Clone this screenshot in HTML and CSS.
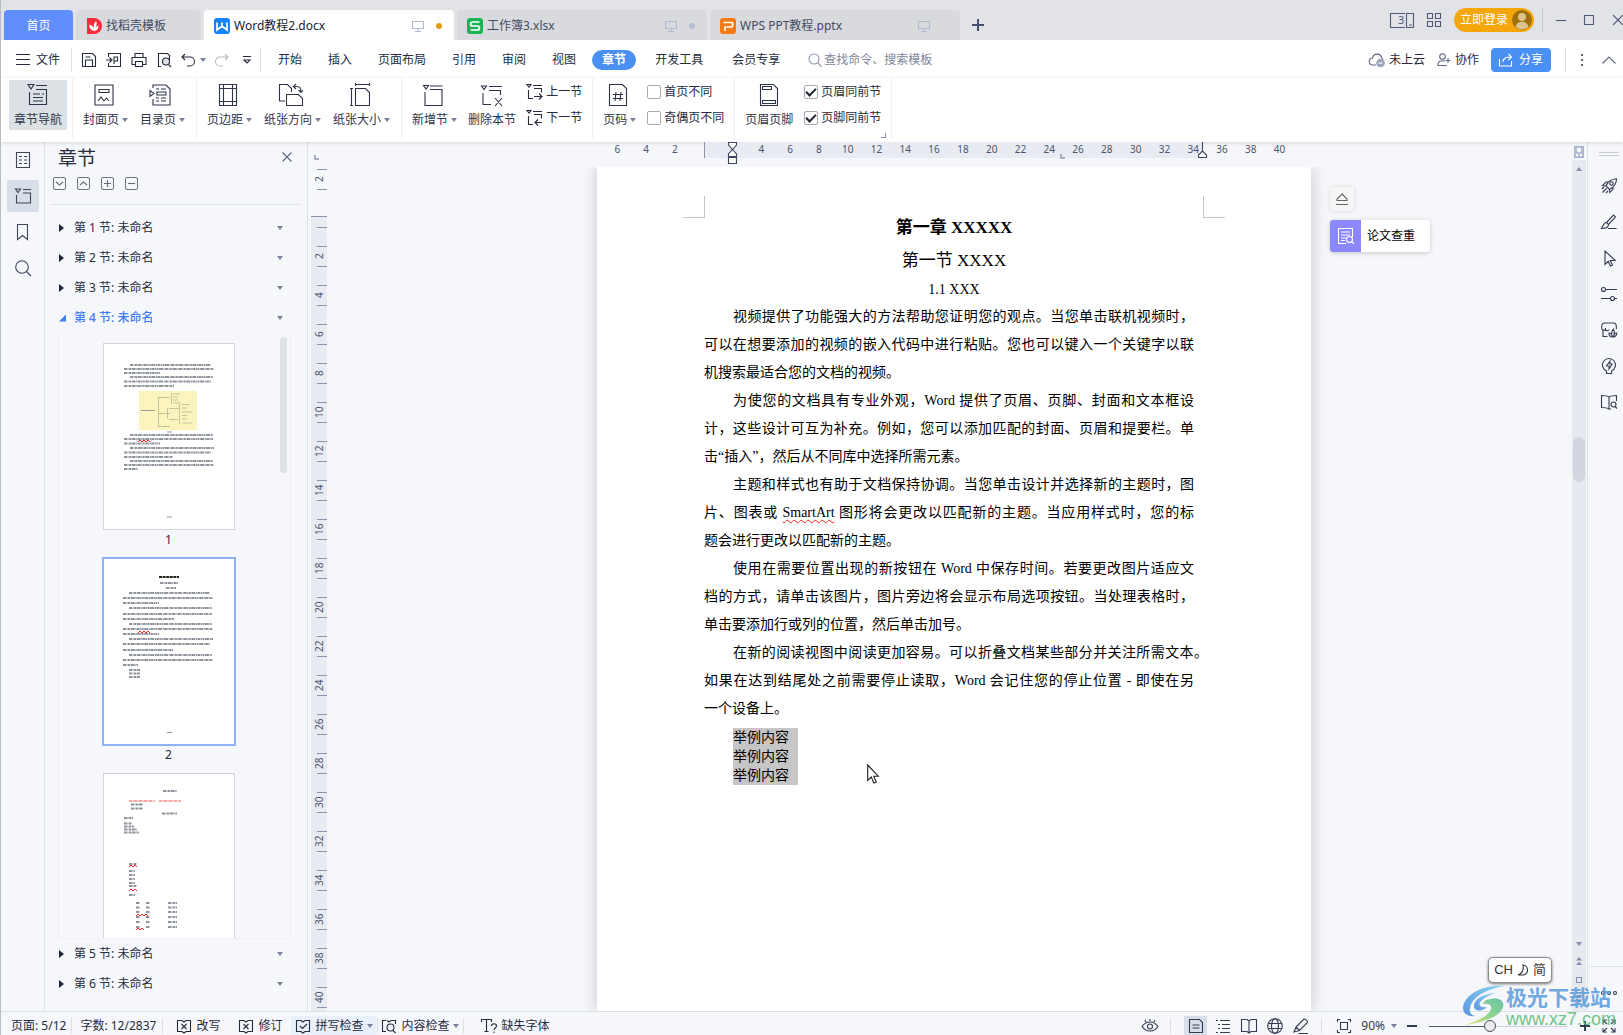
FILE: index.html
```html
<!DOCTYPE html>
<html lang="zh-CN">
<head>
<meta charset="utf-8">
<title>Word教程2.docx</title>
<link rel="stylesheet" href="styles.css">
</head>
<body>
<svg class="defs" aria-hidden="true">
  <symbol id="i-caret" viewBox="0 0 6 4"><path d="M0 0h6L3 4z" fill="currentColor" stroke="none"/></symbol>
  <symbol id="i-monitor" viewBox="0 0 12 12"><path d="M.5 1.500h11v7H.5zM6 9v2M3 11.500h6"/></symbol>
  <symbol id="i-statusbook" viewBox="0 0 16 16"><path d="M6 2.500H1.500v11H6l2 1.500 2-1.500h4.500v-11H10L8 4 6 2.500z"/></symbol>
</svg>

<header class="titlebar">
  <nav class="tabs">
    <button class="tab home">首页</button>
    <button class="tab docer"><svg class="i16" viewBox="0 0 16 16"><path d="M1 0h7a8 8 0 0 1 0 16H1z" fill="#f82b3b" stroke="none"/><path d="M8 13C4 12 3 9 3.500 6.500 6 7.500 7.500 9 8 11 7 8 8 5 10 3c1.500 3 .5 6-1.500 8 1-1.500 2.500-3 4-3.200C12.500 11 11 13 8 13z" fill="#fff" stroke="none"/></svg><span>找稻壳模板</span></button>
    <button class="tab doc active"><svg class="i16" viewBox="0 0 16 16"><rect width="16" height="16" rx="3" fill="#1684fb" stroke="none"/><path d="M3 4.500V12l5-4 5 4V4.500M8 4.500V8" stroke="#fff" stroke-width="1.700"/></svg><span>Word教程2.docx</span><svg class="i12 mon" ><use href="#i-monitor"/></svg><i class="dot orange"></i></button>
    <button class="tab doc"><svg class="i16" viewBox="0 0 16 16"><rect width="16" height="16" rx="3" fill="#18b456" stroke="none"/><path d="M12.500 4h-7C3 4 3 8 5.500 8h5c2.500 0 2.500 4 0 4h-7" stroke="#fff" stroke-width="1.700"/></svg><span>工作簿3.xlsx</span><svg class="i12 mon"><use href="#i-monitor"/></svg><i class="dot"></i></button>
    <button class="tab doc"><svg class="i16" viewBox="0 0 16 16"><rect width="16" height="16" rx="3" fill="#f77a12" stroke="none"/><path d="M3.500 4.500H12c1 0 1 4.500-.5 4.500H5V13" stroke="#fff" stroke-width="1.700"/></svg><span>WPS PPT教程.pptx</span><svg class="i12 mon"><use href="#i-monitor"/></svg><i class="dot none"></i></button>
    <button class="newtab" aria-label="新建"><svg class="i12" viewBox="0 0 12 12"><path d="M6 0v12M0 6h12" stroke-width="2"/></svg></button>
  </nav>
  <div class="winctl">
    <button aria-label="窗口"><svg width="24" height="15" viewBox="0 0 24 15"><path d="M15 .5H.5v14H15M16.500 14.500v-14h7v14zM19 12h3"/></svg><b class="three">3</b></button>
    <button aria-label="应用"><svg width="14" height="14" viewBox="0 0 14 14"><path d="M.5 .5h5v5h-5zM8.500 .5h5v5h-5zM.5 8.500h5v5h-5zM8.500 8.500h5v5h-5z"/></svg></button>
    <button class="login">立即登录<svg width="20" height="20" viewBox="0 0 20 20"><circle cx="10" cy="10" r="10" fill="#a16f08" stroke="none"/><circle cx="10" cy="7" r="4" fill="#dcc28d" stroke="none"/><path d="M3.500 17c1-7 12-7 13 0a10 10 0 0 1-13 0z" fill="#dcc28d" stroke="none"/></svg></button>
    <i class="bar"></i>
    <button class="win" aria-label="最小化"><svg width="10" height="10" viewBox="0 0 10 10"><path d="M0 5.500h10"/></svg></button>
    <button class="win" aria-label="最大化"><svg width="10" height="10" viewBox="0 0 10 10"><path d="M.5 .5h9v9h-9z"/></svg></button>
    <button class="win last" aria-label="关闭"><svg width="12" height="12" viewBox="0 0 12 12"><path d="M1 1l10 10M11 1L1 11"/></svg></button>
  </div>
</header>

<div class="menubar">
  <button class="file"><svg width="14" height="12" viewBox="0 0 14 12"><path d="M0 .5h14M0 5.500h14M0 10.500h14"/></svg>文件</button>
  <i class="bar"></i>
  <div class="quick">
    <button aria-label="保存"><svg class="i16" viewBox="0 0 16 16"><path d="M1.500 1.500h10l3 3v10h-13zM4.500 14.500V8h7v6.500M4.500 5h5"/></svg></button>
    <button aria-label="输出"><svg class="i16" viewBox="0 0 16 16"><path d="M2.500 5V1.500h12v13h-12V11M0 8h5M3.500 5.500L6 8l-2.500 2.500M8 12V5h3.500v4H8"/></svg></button>
    <button aria-label="打印"><svg class="i16" viewBox="0 0 16 16"><path d="M4 5V1.500h8V5M4 12.500H1V5.500h14v7h-3M4.500 9.500h7v5h-7z"/></svg></button>
    <button aria-label="预览"><svg class="i16" viewBox="0 0 16 16"><path d="M5 14.500H2.500v-13h9l2 2V8M12.500 12.500l2.500 2.500"/><circle cx="10" cy="9.500" r="3.500" fill="#dfe1e8"/></svg></button>
    <button class="undo" aria-label="撤销"><svg class="i14" viewBox="0 0 14 14"><path d="M4 1L1 4l3 3M1 4h8a4.500 4.500 0 0 1 0 9H6"/></svg><svg class="caret"><use href="#i-caret"/></svg></button>
    <button class="off" aria-label="恢复"><svg class="i14" viewBox="0 0 14 14"><path d="M10 1l3 3-3 3M13 4H5a4.500 4.500 0 0 0 0 9h3"/></svg></button>
    <button aria-label="更多"><svg width="8" height="8" viewBox="0 0 8 8"><path d="M0 .5h8M1 4l3 3 3-3z"/></svg></button>
  </div>
  <i class="bar"></i>
  <nav class="menus">
    <button>开始</button><button>插入</button><button>页面布局</button><button>引用</button><button>审阅</button><button>视图</button><button class="pill">章节</button><button class="far">开发工具</button><button class="far">会员专享</button>
  </nav>
  <label class="search"><svg class="i14" viewBox="0 0 14 14"><circle cx="6" cy="6" r="5"/><path d="M9.800 9.800L13.500 13.500"/></svg><input type="text" aria-label="搜索" placeholder="查找命令、搜索模板"></label>
  <div class="acct">
    <button><svg class="i16" viewBox="0 0 16 16"><path d="M7 13H4a3.500 3.500 0 0 1-.5-7 4.800 4.800 0 0 1 9.300-.5l1 2.500"/><circle cx="11.500" cy="11" r="4.300" fill="#9ea6bb" stroke="none"/><path d="M9.500 11h4" stroke="#fff"/></svg>未上云</button>
    <button><svg class="i14" viewBox="0 0 14 14"><circle cx="5.500" cy="3.500" r="2.800"/><path d="M8 8H4c-2 0-3 1.500-3 4.500h9M11 5v5M8.500 7.500h5"/></svg>协作</button>
    <button class="share"><svg class="i14" viewBox="0 0 14 14"><path d="M.5 6v7h12V8M4 9c0-4 3-5 8-5M9.500 1l3 3-3 3"/></svg>分享</button>
    <i class="bar"></i>
    <button class="dots" aria-label="更多"><svg width="4" height="14" viewBox="0 0 4 14"><path d="M1 1h2v2H1zM1 6h2v2H1zM1 11h2v2H1z" fill="currentColor" stroke="none"/></svg></button>
    <button aria-label="收起"><svg width="14" height="8" viewBox="0 0 14 8"><path d="M.5 7.500L7 1l6.500 6.500"/></svg></button>
  </div>
</div>

<div class="ribbon">
  <div class="group first">
    <button class="big on"><svg class="i24" viewBox="0 0 24 24"><path d="M2 1.500h6L5 6zM10 2.500h11M10 6.500h10.500v15h-17V9M7 11h7M16 11h2M7 14.500h10M7 18h10"/></svg><span>章节导航</span></button>
  </div>
  <div class="group">
    <button class="big"><svg class="i24" viewBox="0 0 24 24"><path d="M3 2h18v20H3zM7 6.500h10v3H7zM6 18l3-4 3 4M12 18l2.500-3 2.500 3"/></svg><span>封面页<svg class="caret"><use href="#i-caret"/></svg></span></button>
    <button class="big"><svg class="i24" viewBox="0 0 24 24"><path d="M4 5V2h13l4 4v16H4v-6M1 7.500v6L5 10.500zM7 6h3M12 6h5M8 9h9v3H8zM7 15h3M12 15h5M7 18h3M12 18h5"/></svg><span>目录页<svg class="caret"><use href="#i-caret"/></svg></span></button>
  </div>
  <div class="group">
    <button class="big"><svg class="i24" viewBox="0 0 24 24"><path d="M3.500 1.500h17v21h-17zM7.500 1.500v21M16.500 1.500v21M3.500 5.500h17M3.500 18.500h17"/></svg><span>页边距<svg class="caret"><use href="#i-caret"/></svg></span></button>
    <button class="big"><svg class="i24" viewBox="0 0 24 24"><path d="M6 18H.5V1.500h8l4 4V9M7.500 22.500v-11h12l4 4v7zM15 3.500h3c3 0 4 2 4 5.500M17 1l-2.500 2.500L17 6M19.500 7L22 9.500 24 7"/></svg><span>纸张方向<svg class="caret"><use href="#i-caret"/></svg></span></button>
    <button class="big"><svg class="i24" viewBox="0 0 24 24"><path d="M7.500 5.500h10l4 4v13h-14zM3.500 5.500v17M2 5.500h3M2 22.500h3M7.500 1.500h14M7.500 0v3M21.500 0v3"/></svg><span>纸张大小<svg class="caret"><use href="#i-caret"/></svg></span></button>
  </div>
  <div class="group sections">
    <button class="big"><svg class="i24" viewBox="0 0 24 24"><path d="M2.500 2.500h5L5 6zM9 3h12.500M9 6.500h12v16h-17V9"/></svg><span>新增节<svg class="caret"><use href="#i-caret"/></svg></span></button>
    <button class="big wide"><svg class="i24" viewBox="0 0 24 24"><path d="M1.500 3h5L4 6.500zM9 3.500h13M9 7.500h11.500V12M3 10v11.500h8M15 15l7 8M22 15l-7 8"/></svg><span>删除本节</span></button>
    <div class="pair">
      <button><svg class="i16" viewBox="0 0 16 16"><path d="M0 .5h4L2 3zM6 1.500h9M7 4.500h7.500v4M1.500 6v8.500H6M7 12.500h8M12 9.500l3 3-3 3"/></svg>上一节</button>
      <button><svg class="i16" viewBox="0 0 16 16"><path d="M0 .5h4L2 3zM6 1.500h9M7 4.500h7.500v4M1.500 6v8.500H6M8 12.500h7M11 9.500l-3 3 3 3"/></svg>下一节</button>
    </div>
  </div>
  <div class="group sections">
    <button class="big"><svg class="i24" viewBox="0 0 24 24"><path d="M3.500 1.500h13l4 4v17h-17zM10 9l-1 9M15 9l-1 9M7 11.500h10M7 15.500h10"/></svg><span>页码<svg class="caret"><use href="#i-caret"/></svg></span></button>
    <div class="pair"><label><input type="checkbox">首页不同</label><label><input type="checkbox">奇偶页不同</label></div>
  </div>
  <div class="group hf">
    <button class="big wide"><svg class="i24" viewBox="0 0 24 24"><path d="M3.500 1.500h13l4 4v17h-17zM5.500 3.500h9v3h-9zM5.500 17.500h13v3h-13z"/></svg><span>页眉页脚</span></button>
    <div class="pair"><label><input type="checkbox" checked>页眉同前节</label><label><input type="checkbox" checked>页脚同前节</label></div>
    <i class="launcher"></i>
  </div>
</div>

<main>
  <aside class="rail">
    <button aria-label="目录"><svg class="i16" viewBox="0 0 16 16"><path d="M1.500 .5h13v15h-13zM4 4.500h3M4 8h3M4 11.500h3M9 4.500h3M9 8h3M9 11.500h3"/></svg></button>
    <button class="on" aria-label="章节"><svg class="i16" viewBox="0 0 16 16"><path d="M.5 1h5L3 4.500zM8 1.500h8M8 5h7.500v10h-14V7"/></svg></button>
    <button aria-label="书签"><svg class="i16" viewBox="0 0 16 16"><path d="M2.500 .5h10v15l-5-4-5 4z"/></svg></button>
    <button aria-label="查找"><svg class="i16" viewBox="0 0 16 16"><circle cx="7" cy="7" r="6.300"/><path d="M11.500 11.500L16 16"/></svg></button>
  </aside>

  <aside class="panel">
    <div class="phead"><h2>章节</h2><button aria-label="关闭"><svg width="10" height="10" viewBox="0 0 10 10"><path d="M.5 .5l9 9M9.500 .5l-9 9"/></svg></button></div>
    <div class="ptools">
      <button aria-label="展开"><svg width="7" height="7" viewBox="0 0 7 7"><path d="M0 2l3.500 3L7 2"/></svg></button>
      <button aria-label="折叠"><svg width="7" height="7" viewBox="0 0 7 7"><path d="M0 5l3.500-3L7 5"/></svg></button>
      <button aria-label="新增"><svg width="7" height="7" viewBox="0 0 7 7"><path d="M0 3.500h7M3.500 0v7"/></svg></button>
      <button aria-label="删除"><svg width="7" height="7" viewBox="0 0 7 7"><path d="M0 3.500h7"/></svg></button>
    </div>
    <button class="sec"><i class="tri"></i>第 1 节: 未命名<svg class="caret"><use href="#i-caret"/></svg></button>
    <button class="sec"><i class="tri"></i>第 2 节: 未命名<svg class="caret"><use href="#i-caret"/></svg></button>
    <button class="sec"><i class="tri"></i>第 3 节: 未命名<svg class="caret"><use href="#i-caret"/></svg></button>
    <button class="sec open"><i class="tri"></i>第 4 节: 未命名<svg class="caret"><use href="#i-caret"/></svg></button>
    <div class="thumbs">
      <figure>
        <svg class="thumb" viewBox="0 0 132 187">
          <g class="greek"><path d="M27 22H108M21 26H111M21 30H57M27 34H110M21 38.500H108M21 43H71"/><path d="M27 92H110M21 96H110M21 100.500H57M27 105H111M21 109.500H108M21 114H70M27 118H110M21 122H111M21 126H35"/></g>
          <rect x="36" y="48" width="58" height="39" fill="#fcf4bd" stroke="none"/>
          <g stroke="#c3c49c" stroke-width="1"><path d="M38 67.500h14" stroke="#999"/><path d="M55.500 55v28M55 54.500h12M55 70.500h12M55 83.500h12M68.500 50v11M70 51h7M70 54h5M70 57h5M70 60h8M64.500 65v11M66 65.500h10M66 76.500h9M76.500 61v10M79 61.500h8M79 65h5M79 69h10M76.500 72v9M79 72.500h5M79 76h5M79 80h10"/></g>
          <path d="M64 89h5M64 174h5" stroke="#999"/>
          <path class="wave" d="M35 99l2-2 2 2 2-2 2 2 2-2 2 2"/>
        </svg>
        <figcaption>1</figcaption>
      </figure>
      <figure class="cur">
        <svg class="thumb" viewBox="0 0 132 187">
          <path d="M56 19h20" stroke="#222" stroke-width="2" stroke-dasharray="3 .6"/>
          <g class="greek"><path d="M57 25H75M63 30H73M26 35H107M20 40H110M20 45H56M26 50H109M20 56H109M20 61H71M26 66H109M20 71H110M20 76H56M26 81H110M20 86H107M20 92H70M26 97H109M20 102H110M20 107H35M26 112H37M26 115.500H37M26 119H37"/></g>
          <path d="M64 174.500h5" stroke="#999"/>
          <path class="wave" d="M35 75l2-2 2 2 2-2 2 2 2-2 2 2"/>
        </svg>
        <figcaption>2</figcaption>
      </figure>
      <figure>
        <svg class="thumb" viewBox="0 0 132 187">
          <g class="greek"><path d="M60 18H74M28 31.500H40M28 35.500H40M59 40.500H74M21 45H30M21 50.500H29M21 53.500H31M21 56.500H34M21 59.500H36M26 91H34M26 98H32M26 102H32M26 106H32M26 110H32M26 113H34M26 122H32"/><path d="M33 130h4m6 0h4m18 0h9M33 134.500h4m6 0h4m18 0h9M33 139h4m6 0h4m18 0h9M33 144h4m6 0h4m18 0h9M33 149h4m6 0h4m18 0h9M33 154h4m6 0h4m18 0h9"/></g>
          <path d="M26 28H52M56 28H78" stroke="#f88" stroke-width="1.500" stroke-dasharray="3 .6 1 .4"/>
          <path class="wave" d="M26 94l2-2 2 2 2-2 2 2M26 118l2-2 2 2 2-2 2 2M33 143l2-2 2 2 2-2 2 2 2-2 2 2M33 157l2-2 2 2 2-2 2 2"/>
        </svg>
      </figure>
      <i class="tbar"></i>
    </div>
    <button class="sec"><i class="tri"></i>第 5 节: 未命名<svg class="caret"><use href="#i-caret"/></svg></button>
    <button class="sec end"><i class="tri"></i>第 6 节: 未命名<svg class="caret"><use href="#i-caret"/></svg></button>
  </aside>

  <div class="vruler">
    <i class="ell"></i>
    <div class="above"><b>2</b></div>
    <div class="scale"><b class="zero"></b><b>2</b><b>4</b><b>6</b><b>8</b><b>10</b><b>12</b><b>14</b><b>16</b><b>18</b><b>20</b><b>22</b><b>24</b><b>26</b><b>28</b><b>30</b><b>32</b><b>34</b><b>36</b><b>38</b><b>40</b></div>
  </div>

  <section class="work">
    <div class="hruler">
      <div class="marks"><b>6</b><b>4</b><b>2</b><b></b><b></b><b>4</b><b>6</b><b>8</b><b>10</b><b>12</b><b>14</b><b>16</b><b>18</b><b>20</b><b>22</b><b>24</b><b>26</b><b>28</b><b>30</b><b>32</b><b>34</b><b>36</b><b>38</b><b>40</b></div>
      <div class="band">
        <svg class="hourglass" viewBox="0 0 11 22"><path d="M1.500 .5h8V3L6 7v1l3.500 4v2.500h-8V12L5 8V7L1.500 3zM1.500 15.500h8v6h-8z"/></svg>
        <svg class="rindent" viewBox="0 0 9 16"><path d="M4.500 0v10M.5 15.500V13l4-4 4 4v2.500z"/></svg>
        <i class="ell"></i>
      </div>
    </div>
    <div class="canvas">
      <article class="page">
        <i class="corner left"></i><i class="corner right"></i>
        <h1>第一章 XXXXX</h1>
        <h2>第一节 XXXX</h2>
        <h3>1.1 XXX</h3>
        <p><span>视频提供了功能强大的方法帮助您证明您的观点。当您单击联机视频时，</span><span>可以在想要添加的视频的嵌入代码中进行粘贴。您也可以键入一个关键字以联</span><span>机搜索最适合您的文档的视频。</span></p>
        <p><span>为使您的文档具有专业外观，Word 提供了页眉、页脚、封面和文本框设</span><span>计，这些设计可互为补充。例如，您可以添加匹配的封面、页眉和提要栏。单</span><span>击“插入”，然后从不同库中选择所需元素。</span></p>
        <p><span>主题和样式也有助于文档保持协调。当您单击设计并选择新的主题时，图</span><span>片、图表或 <u>SmartArt</u> 图形将会更改以匹配新的主题。当应用样式时，您的标</span><span>题会进行更改以匹配新的主题。</span></p>
        <p><span>使用在需要位置出现的新按钮在 Word 中保存时间。若要更改图片适应文</span><span>档的方式，请单击该图片，图片旁边将会显示布局选项按钮。当处理表格时，</span><span>单击要添加行或列的位置，然后单击加号。</span></p>
        <p><span class="hang">在新的阅读视图中阅读更加容易。可以折叠文档某些部分并关注所需文本。</span><span>如果在达到结尾处之前需要停止读取，Word 会记住您的停止位置 - 即使在另</span><span>一个设备上。</span></p>
        <ul class="sel"><li>举例内容</li><li>举例内容</li><li>举例内容</li></ul>
        <svg class="cursor" viewBox="0 0 12 20"><path d="M.7 1v15.500l3.600-3.500 2.500 6 2.400-1-2.500-5.800h4.600z" fill="#fff" stroke="#222"/></svg>
      </article>
      <div class="float">
        <button class="eject" aria-label="收起"><svg width="14" height="12" viewBox="0 0 14 12"><path d="M7 1l5 5v1.500H2V6zM1 11.500h12"/></svg></button>
        <button class="check"><span><svg class="i16" viewBox="0 0 16 16"><path d="M8 15.500H.5V.5h14V9M3 4h9M3 7h9M3 10h5M3 12.500h4M13.500 13.500l2.500 2.500"/><circle cx="11.500" cy="11.500" r="3"/></svg></span>论文查重</button>
      </div>
    </div>
  </section>

  <div class="vscroll">
    <svg class="rtoggle" viewBox="0 0 10 12"><path d="M.5 .5h9v11h-9z" fill="#b6bfd6"/><path d="M3 2h4v3L5 6.500 3 5zM2 8h2v2H2zM6 8h2v2H6z" fill="#fff" stroke="none"/></svg>
    <div class="track">
      <svg class="caret up"><use href="#i-caret"/></svg>
      <i class="knob"></i>
      <svg class="caret down"><use href="#i-caret"/></svg>
      <svg width="6" height="8" viewBox="0 0 6 8"><path d="M0 3.500h6L3 0zM0 8h6L3 4.500z" fill="currentColor" stroke="none"/></svg>
      <svg width="6" height="6" viewBox="0 0 6 6"><path d="M.5 .5h5v5h-5z"/></svg>
      <svg width="6" height="8" viewBox="0 0 6 8"><path d="M0 0h6L3 3.500zM0 4.500h6L3 8z" fill="currentColor" stroke="none"/></svg>
    </div>
  </div>

  <aside class="tools">
    <i class="grip"></i>
    <button aria-label="推荐"><svg class="i16" viewBox="0 0 16 16"><path d="M5 8C7 3 10 1 15.500 .7 15.500 6 13 9 8.500 11.500zM5 8L1.500 7.500 5 4h3M8.500 11.500l.3 3L12 11V8.500M1 11l2-2M1.500 14.500l4-4M5 15l2-2"/><circle cx="10.500" cy="5.500" r="1.700"/></svg></button>
    <button aria-label="样式"><svg class="i16" viewBox="0 0 16 16"><path d="M5.500 8.500l7-7.500 2 2-7 7.500zM5.500 8.500c-3 0-3 3-5 6 3 0 7 0 7-4M7 14.500h8.500"/></svg></button>
    <button aria-label="选择"><svg class="i16" viewBox="0 0 16 16"><path d="M4 1v13.500l3.200-3.200L9.500 16l2-1-2.300-4.500h5z"/></svg></button>
    <button aria-label="属性"><svg class="i16" viewBox="0 0 16 16"><circle cx="2.500" cy="3.500" r="2"/><path d="M4.500 3.500H16M0 12.500h9M13.500 12.500H16"/><circle cx="11.500" cy="12.500" r="2"/></svg></button>
    <button aria-label="素材"><svg class="i16" viewBox="0 0 16 16"><path d="M2 8V14.500h4.500M4.500 7.500C3 9 .7 8 .7 6V4.500C.7 2.500 1.500 1 3.500 1h9C14.500 1 15.300 2.500 15.300 4.500V7M4.500 6v2c1 1 2.500 1 3.500-.5"/><path d="M11.500 15c-2 0-3.500-1.500-3.500-4 1 0 2 .5 2.500 1.500 0-2 .5-4 1.800-5.500 1 1.500 1.300 3.500.7 5.500.5-1 1.500-1.500 2.700-1.500 0 2.500-1.700 4-4.200 4zM10.500 12.500l1.500 2.500 1.500-2.500"/></svg></button>
    <button aria-label="灵感"><svg class="i16" viewBox="0 0 16 16"><path d="M5.500 13a6.500 6.500 0 1 1 5 0v2.500h-5zM9 3L5.500 8H8v3l3-5H8.800z"/></svg></button>
    <button aria-label="词典"><svg class="i16" viewBox="0 0 16 16"><path d="M8 3C6 1.500 3 1.500 .5 1.500v12c3 0 5.500 0 7.500 1.500zM8 3c2-1.500 5-1.500 7.500-1.500V7M8 15h2M14 12.500l2 2"/><circle cx="12.500" cy="10.500" r="2.500"/></svg></button>
    <button class="more" aria-label="更多"><svg width="16" height="4" viewBox="0 0 16 4"><circle cx="2" cy="2" r="1.500"/><circle cx="8" cy="2" r="1.500"/><circle cx="14" cy="2" r="1.500"/></svg></button>
  </aside>
</main>

<footer class="status">
  <button class="st">页面: 5/12</button><i class="bar"></i>
  <button class="st words">字数: 12/2837</button><i class="bar"></i>
  <button class="st ico"><svg class="i16" viewBox="0 0 16 16"><use href="#i-statusbook"/><path d="M5.500 6l5 5M10.500 6l-5 5"/></svg>改写</button>
  <button class="st ico2"><svg class="i16" viewBox="0 0 16 16"><use href="#i-statusbook"/><path d="M5.500 6l5 5M10.500 6l-5 5"/></svg>修订</button>
  <button class="st spell"><svg class="i16" viewBox="0 0 16 16"><use href="#i-statusbook"/><path d="M5 8l2.500 2.500L12 6"/></svg>拼写检查<svg class="caret"><use href="#i-caret"/></svg></button><i class="bar"></i>
  <button class="st cont"><svg class="i16" viewBox="0 0 16 16"><path d="M5 2.500H1.500v11H5M6 2.500L8 4l2-1.500h4.500V6M12 12.500l2.500 2.500"/><circle cx="9.500" cy="9.500" r="3.500"/></svg>内容检查<svg class="caret"><use href="#i-caret"/></svg></button><i class="bar"></i>
  <button class="st miss"><svg class="i16" viewBox="0 0 16 16"><path d="M.5 4V1.500h10V4M5.500 1.500v12M3.500 13.500h4M10.500 8c0-3 5-3 5 0 0 2-2.500 2-2.500 4M13 13.500V15"/></svg>缺失字体</button>
  <div class="views">
    <button class="eye" aria-label="护眼"><svg class="i16" viewBox="0 0 16 16"><path d="M0 8.500c4-6 12-6 16 0-4 6-12 6-16 0zM8 1v2M3 2l1 2M13 2l-1 2"/><circle cx="8" cy="8.500" r="2.500"/></svg></button>
    <i class="bar"></i>
    <button class="on" aria-label="页面视图"><svg class="i16" viewBox="0 0 16 16"><path d="M1.500 1.500h10l3 3v10h-13zM4.500 7h7M4.500 10h7"/></svg></button>
    <button aria-label="大纲"><svg class="i16" viewBox="0 0 16 16"><path d="M1 2.500h2M5 2.500h10M3 6.500h2M7 6.500h8M3 10.500h2M7 10.500h8M1 14.500h2M5 14.500h10"/></svg></button>
    <button aria-label="阅读"><svg class="i16" viewBox="0 0 16 16"><path d="M6 1.500H.5v12H6l2 1.500 2-1.500h5.500v-12H10L8 3zM8 3v12"/></svg></button>
    <button aria-label="网页"><svg class="i16" viewBox="0 0 16 16"><circle cx="8" cy="8" r="7.300"/><ellipse cx="8" cy="8" rx="3.500" ry="7.300"/><path d="M1.500 5.500h13M1.500 10.500h13"/></svg></button>
    <button aria-label="写作"><svg class="i16" viewBox="0 0 16 16"><path d="M3 9l8-8c1 0 4 2 3.500 3.500l-8 8L1 14zM3 9l3.500 3.500M5.500 15.500H15"/></svg></button>
    <i class="bar"></i>
    <button class="fit" aria-label="适合"><svg class="i14" viewBox="0 0 14 14"><path d="M.5 3V.5H3M11 .5h2.500V3M13.500 11v2.500H11M3 13.500H.5V11M3.500 3.500h7v7h-7z"/></svg></button>
    <button class="pct">90%<svg class="caret"><use href="#i-caret"/></svg></button>
    <button aria-label="缩小"><svg width="10" height="10" viewBox="0 0 10 10"><path d="M0 5h10" stroke-width="2"/></svg></button>
    <input class="zoom" type="range" aria-label="缩放" min="0" max="100" value="44">
    <button aria-label="放大"><svg width="10" height="10" viewBox="0 0 10 10"><path d="M0 5h10M5 0v10" stroke-width="2"/></svg></button>
    <button class="full" aria-label="全屏"><svg class="i14" viewBox="0 0 14 14"><path d="M1 5V1h4M1 1l4 4M9 1h4v4M13 1L9 5M13 9v4H9M13 13L9 9M5 13H1V9M1 13l4-4"/></svg></button>
  </div>
</footer>

<div class="ime">CH <svg width="12" height="12" viewBox="0 0 12 12"><path d="M6 1c6 1 6 9 0 10H1c5-2 6-5 5-10z"/></svg> 简</div>
<div class="brand">
  <svg viewBox="0 0 44 42"><defs><linearGradient id="g1" x1="0" y1="1" x2="1" y2="0"><stop offset="0" stop-color="#3f86d8"/><stop offset="1" stop-color="#7fcdf2"/></linearGradient><linearGradient id="g2" x1="0" y1="1" x2="1" y2="0"><stop offset="0" stop-color="#efe05a"/><stop offset=".5" stop-color="#7fcf7d"/><stop offset="1" stop-color="#4fb99a"/></linearGradient></defs>
  <path d="M43 1C20-1 2 10 1 23c0 6 6 9 12 8-4-1-6-4-5-8C10 12 24 4 43 1z" fill="url(#g1)" stroke="none"/><path d="M33 8C20 9 11 15 12 22c1 5 9 4 13 0-7 1-9-2-6-6 3-3 8-6 14-8z" fill="url(#g1)" stroke="none"/><path d="M24 15c12-4 19 0 17 7C38 32 22 37 3 40c12-4 24-9 26-16 1-4-2-6-9-5z" fill="url(#g2)" stroke="none"/></svg>
  <div><strong>极光下载站</strong><em>www.xz7.com</em></div>
</div>
</body>
</html>
```

FILE: styles.css
```css
* { box-sizing: border-box; }
html, body { height: 100%; margin: 0; }
body {
  display: flex;
  flex-direction: column;
  position: relative;
  overflow: hidden;
  border-left: 1px solid #b9bcc2;
  background: #f5f7fa;
  color: #262c3d;
  font: 12px/16px "Noto Sans", "Noto Sans CJK SC", sans-serif;
}
button {
  display: flex;
  align-items: center;
  flex: none;
  padding: 0;
  border: 0;
  background: none;
  color: inherit;
  font: inherit;
  white-space: nowrap;
}
svg { flex: none; display: block; fill: none; stroke: currentColor; stroke-width: 1.1; overflow: visible; }
.defs { position: absolute; width: 0; height: 0; }
.i12 { width: 12px; height: 12px; }
.i14 { width: 14px; height: 14px; }
.i16 { width: 16px; height: 16px; }
.i24 { width: 24px; height: 24px; }
.caret { width: 6px; height: 4px; color: #77819a; }
.bar { flex: none; width: 1px; height: 24px; background: #dcdee4; }

/* title bar */
.titlebar { display: flex; justify-content: space-between; flex: none; height: 40px; background: #e2e3e7; }
.tabs { display: flex; align-items: flex-end; gap: 3px; padding-left: 3px; }
.tab { gap: 4px; height: 30px; padding: 2px 10px 0; border-radius: 4px 4px 0 0; background: #d8dade; color: #434b60; }
.tab.home { justify-content: center; width: 69px; background: #5f8df9; color: #fff; }
.tab.docer { width: 125px; }
.tab.doc { width: 250px; padding-right: 12px; }
.tab.active { background: #fff; color: #1b2030; }
.mon { margin-left: auto; color: #b3bad0; }
.dot { width: 6px; height: 6px; margin-left: 8px; border-radius: 50%; background: #b6bdd2; }
.dot.orange { background: #e69a0c; }
.dot.none { background: none; }
.newtab { height: 30px; padding: 0 9px; color: #46506a; }
.winctl { display: flex; align-items: center; gap: 13px; margin-right: -1px; color: #4e5a78; }
.winctl button { position: relative; }
.three { position: absolute; left: 8px; font-size: 11px; font-weight: 400; }
.winctl .login { gap: 4px; height: 24px; padding: 0 2px 0 6px; border-radius: 12px; background: #f5a60b; color: #fff; }
.winctl .bar { margin-left: -5px; background: #c7cad1; }
.win { margin-right: 5px; }
.win.last { margin-right: 0; }

/* menu bar */
.menubar { display: flex; align-items: center; flex: none; height: 38px; padding: 1px 0 0 15px; background: #fff; }
.file { gap: 6px; margin-right: 11px; }
.quick { display: flex; align-items: center; gap: 9px; padding: 0 9px; }
.undo { gap: 5px; }
.off { color: #b5b9c3; }
.quick button:last-child { margin: 0 0 0 5px; }
.menus { display: flex; align-items: center; padding-left: 4px; }
.menus button { padding: 0 13px; }
.menus .pill { height: 20px; margin: 0 3px; padding: 0 10px; border-radius: 10px; background: #4a90f3; color: #fff; font-weight: 700; }
.menus .far { padding: 0 13px 0 16px; }
.search { display: flex; align-items: center; gap: 2px; margin-left: 15px; color: #8d96ad; }
.search input { width: 140px; padding: 0; border: 0; background: none; font: inherit; }
.search input::placeholder { color: #7d869c; opacity: 1; }
.acct { display: flex; align-items: center; gap: 12px; margin-left: auto; padding-right: 7px; }
.acct button { gap: 4px; }
.acct svg { color: #5d667e; }
.acct .share { gap: 6px; height: 24px; padding: 0 8px; border-radius: 4px; background: #4a90f3; color: #fff; }
.acct .share svg { color: #fff; }
.acct .bar { margin: 0 2px; }
.acct .dots { margin-right: 6px; }

/* ribbon */
.ribbon { display: flex; flex: none; height: 64px; background: #fff; box-shadow: 0 1px 4px #0002; position: relative; }
.group { display: flex; gap: 12px; align-items: flex-start; height: 61px; padding: 2px 11px 0 10px; border-right: 1px solid #eceef1; position: relative; }
.group.first { padding: 2px 5px 0 8px; }
.group.sections { gap: 11px; padding-right: 10px; }
.group.hf { gap: 11px; padding-right: 10px; }
.big { flex-direction: column; gap: 5px; height: 50px; padding-top: 3px; color: #2e3549; }
.big .i24 { margin-right: 3px; }
.big span { display: flex; align-items: center; gap: 3px; }
.big.on { padding: 3px 5px 0; background: #dce1e6; }
.big.on .i24, .big.wide .i24 { margin-right: 0; }
.pair { display: flex; flex-direction: column; gap: 10px; padding-top: 4px; }
.pair button, .pair label { display: flex; align-items: center; gap: 3px; height: 16px; white-space: nowrap; }
.pair input {
  appearance: none;
  width: 14px;
  height: 14px;
  margin: 0;
  border: 1px solid #a5aab5;
  border-radius: 2px;
  background: #fff;
}
.pair input:checked { display: grid; place-items: center; }
.pair input:checked::after {
  content: "";
  width: 8px;
  height: 4px;
  border: solid #1f2433;
  border-width: 0 0 2px 2px;
  transform: translateY(-1px) rotate(-45deg);
}
.launcher { position: absolute; right: 5px; bottom: 1px; width: 5px; height: 5px; border: solid #8b93a8; border-width: 0 1px 1px 0; }

/* workspace */
main { display: flex; flex: 1; min-height: 0; }
.rail { display: flex; flex-direction: column; gap: 4px; width: 44px; padding: 2px 6px; border-right: 1px solid #dfe2e7; color: #3d465c; }
.rail button { justify-content: center; width: 32px; height: 32px; border-radius: 3px; }
.rail .on { background: #d9dfe8; }

.panel { display: flex; flex-direction: column; width: 263px; flex: none; border-right: 1px solid #dfe2e7; }
.phead { display: flex; align-items: center; justify-content: space-between; height: 30px; padding: 0 15px 0 13px; color: #5b6580; }
.phead h2 { margin: 0; color: #262c3d; font: 400 19px/28px "Noto Sans CJK SC", sans-serif; }
.ptools { display: flex; gap: 11px; height: 33px; margin: 0 7px 8px 5px; padding: 5px 3px 0; border-bottom: 1px solid #e0e3e8; }
.ptools button { justify-content: center; width: 13px; height: 13px; border: 1px solid #6f7480; border-radius: 2px; color: #666c78; }
.sec { gap: 10px; height: 30px; padding: 0 24px 0 14px; }
.sec .caret { margin-left: auto; }
.tri { width: 5px; height: 8px; background: #20263a; clip-path: polygon(0 0, 100% 50%, 0 100%); }
.sec.open { gap: 8px; color: #3f7df5; font-weight: 500; }
.sec.open .tri { width: 7px; height: 7px; background: #3f7df5; clip-path: polygon(100% 0, 100% 100%, 0 100%); }
.sec.end { margin-bottom: 12px; }
.thumbs { position: relative; flex: 1; min-height: 0; overflow: hidden; margin: 0 16px 0 13px; padding-top: 8px; border: solid #eef0f3; border-width: 0 1px 1px; }
.thumbs figure { display: flex; flex-direction: column; align-items: center; margin: 0; padding-right: 12px; height: 215px; }
.thumb { width: 132px; height: 187px; margin: 2px 0; background: #fff; outline: 1px solid #d3d5d9; outline-offset: -1px; }
.cur .thumb { outline: 2px solid #8fb2f8; outline-offset: -1px; }
.thumbs figcaption { line-height: 16px; }
.greek { stroke: #8f939b; stroke-width: 2; stroke-dasharray: 3 .5 1 .5 2 .6 4 .7 1 .4; }
.wave { stroke: #e22; stroke-width: 1; }
.tbar { position: absolute; top: 4px; right: 3px; width: 7px; height: 136px; border-radius: 4px; background: #dee1e5; }

.ell { width: 5px; height: 5px; border: solid #a9afbd; border-width: 0 0 2px 2px; }
.vruler { flex: none; width: 20px; padding-left: 3px; overflow: hidden; display: flex; flex-direction: column; color: #4b556d; }
.vruler .ell { flex: none; margin: 13px 0 0 3px; }
.vruler b { display: flex; align-items: center; justify-content: center; flex: none; width: 16px; height: 39px; font: 400 10px/12px "Noto Sans", sans-serif; writing-mode: vertical-rl; transform: rotate(180deg); background: linear-gradient(#8b94aa, #8b94aa) 0 9px / 10px 1px no-repeat, linear-gradient(#8b94aa, #8b94aa) 0 29px / 10px 1px no-repeat; }
.vruler .above { flex: none; height: 56px; }
.vruler .scale { flex: 1; width: 16px; min-height: 0; overflow: hidden; background: #e8ebf2; border-top: 1px solid #8b94aa; }
.vruler .scale .zero { height: 20px; background: linear-gradient(#8b94aa, #8b94aa) 0 9px / 10px 1px no-repeat; }

.work { display: flex; flex-direction: column; flex: 1; min-width: 0; padding-left: 8px; overflow: hidden; }
.hruler { position: relative; flex: none; width: 714px; height: 25px; margin: 0 auto; }
.marks { position: relative; z-index: 1; display: grid; grid-template-columns: repeat(24, 1fr); padding: 0 17px 0 6px; color: #4b556d; font-size: 10px; line-height: 15px; text-align: center; }
.marks b { font-weight: 400; }
.band { position: absolute; top: 0; left: 107px; right: 108px; height: 16px; background: #e8ebf2; border-left: 1px solid #8b94aa; }
.hourglass { position: absolute; left: 22px; top: 0; width: 11px; height: 22px; fill: #fff; color: #3d465c; }
.rindent { position: absolute; right: -4px; top: 0; width: 9px; height: 16px; color: #3d465c; fill: #fff; }
.band .ell { position: absolute; left: 355px; top: 12px; }
.canvas { position: relative; display: flex; justify-content: center; flex: 1; min-height: 0; }
.page { position: relative; flex: none; width: 714px; padding: 44px 107px 0; background: #fff; box-shadow: 0 0 16px #0003; clip-path: inset(0 -18px 0 -18px); color: #000; font: 14px/28px "Liberation Serif", "Noto Sans CJK SC", serif; text-spacing-trim: space-all; }
.page h1, .page h2, .page h3 { margin: 0; text-align: center; font-weight: 400; font-size: 17px; line-height: 34px; }
.page h1 { font-weight: 700; }
.page h2 { line-height: 32px; }
.page h3 { font-size: 14px; line-height: 26px; }
.page p { margin: 0; padding-right: 10px; }
.page p span { display: block; white-space: nowrap; text-align: justify; text-align-last: justify; }
.page p span:first-child { padding-left: 29px; }
.page p span:last-child { text-align-last: left; }
.page p .hang { margin-right: -14px; }
.page u { text-decoration: underline wavy #e22 1px; text-underline-offset: 2px; }
.sel { width: 65px; margin: 5px 0 0 29px; padding: 0; list-style: none; background: #c6c6c6; line-height: 19px; }
.corner { position: absolute; top: 29px; width: 22px; height: 22px; border: 0 solid #c4c6c9; border-bottom-width: 1px; }
.corner.left { left: 86px; border-right-width: 1px; }
.corner.right { right: 86px; border-left-width: 1px; }
.cursor { position: absolute; left: 270px; top: 597px; width: 12px; height: 20px; }
.float { position: absolute; top: 20px; left: 50%; margin-left: 376px; display: flex; flex-direction: column; align-items: flex-start; gap: 9px; }
.eject { justify-content: center; width: 24px; height: 24px; border-radius: 2px; background: #f5f5f6; box-shadow: 0 0 4px #0002; color: #63666d; }
.check { gap: 6px; width: 100px; height: 32px; border-radius: 3px; background: #fff; box-shadow: 0 1px 5px #0003; color: #000; overflow: hidden; }
.check span { display: grid; place-items: center; width: 31px; height: 32px; background: #8b88ff; color: #fff; }

.vscroll { display: flex; flex-direction: column; flex: none; width: 16px; border-right: 1px solid #dfe1e8; color: #8490ae; }
.rtoggle { width: 10px; height: 12px; margin: 4px 0 2px 2px; color: #aab3cc; }
.track { display: flex; flex-direction: column; align-items: center; flex: 1; width: 14px; padding-bottom: 8px; background: #e7e9f0; }
.track .caret { color: #8490ae; }
.track .up { margin-top: 7px; transform: rotate(180deg); }
.track .down { margin-bottom: 11px; margin-top: auto; }
.track svg:nth-of-type(3), .track svg:nth-of-type(4) { margin-bottom: 12px; }
.knob { width: 12px; height: 45px; margin-top: 266px; border-radius: 6px; background: #d2d6df; }

.tools { display: flex; flex-direction: column; align-items: center; gap: 20px; flex: none; width: 35px; padding: 10px 0 17px 6px; color: #343c52; }
.grip { width: 20px; height: 4px; margin-bottom: 2px; border: solid #c9ccd3; border-width: 1px 0; }
.tools .more { justify-content: center; align-self: stretch; height: 28px; margin-top: auto; margin-left: -5px; padding: 24px 0 0 5px; border-top: 1px solid #dfe1e8; }

/* status bar */
.status { display: flex; align-items: center; flex: none; height: 24px; padding-top: 4px; border-top: 1px solid #dcdfe5; }
.status .bar { height: 16px; }
.st { gap: 4px; height: 20px; padding: 0 5px 0 10px; }
.st.words { padding: 0 6px 0 8px; }
.st.ico { padding: 0 9px 0 13px; }
.st.ico2 { padding: 0 9px; }
.st.spell { padding: 0 3px 0 4px; background: #e8f0fb; }
.spell + .bar { margin-left: 1px; }
.st.cont { padding: 0 4px 0 3px; }
.st.miss { padding-left: 17px; }
.views { display: flex; align-items: center; gap: 10px; margin-left: auto; padding-right: 7px; color: #343c52; }
.views .on { justify-content: center; width: 23px; height: 20px; margin: 0 -2px 0 1px; background: #d9dfe8; }
.views .bar { margin: 0 2px; }
.views .fit { margin-left: 3px; }
.pct { gap: 6px; }
.zoom { appearance: none; width: 138px; height: 14px; margin: 0 3px 0 2px; background: linear-gradient(90deg, #4d5875 44%, #cdd1db 44%) 0 7px / 100% 1px no-repeat; }
.zoom::-webkit-slider-thumb { appearance: none; width: 12px; height: 12px; border: 1px solid #4a5060; border-radius: 50%; background: #ececec; }
.full { margin-left: 2px; }

.ime { position: absolute; right: 71px; bottom: 52px; display: flex; align-items: center; gap: 4px; height: 26px; padding: 0 5px; border: 1px solid #8d8d8d; border-radius: 5px; background: #fff; box-shadow: 0 1px 3px #0008; color: #333; font: 13px/24px "Liberation Sans", "Noto Sans CJK SC", sans-serif; }
.brand { position: absolute; right: 7px; bottom: 7px; display: flex; pointer-events: none; opacity: .85; }
.brand svg { width: 44px; height: 42px; }
.brand div { display: flex; flex-direction: column; }
.brand strong { color: #5b9bdc; font-size: 21px; line-height: 25px; }
.brand em { color: #57bd79; font: 400 18px/18px "Liberation Sans", sans-serif; }
```
